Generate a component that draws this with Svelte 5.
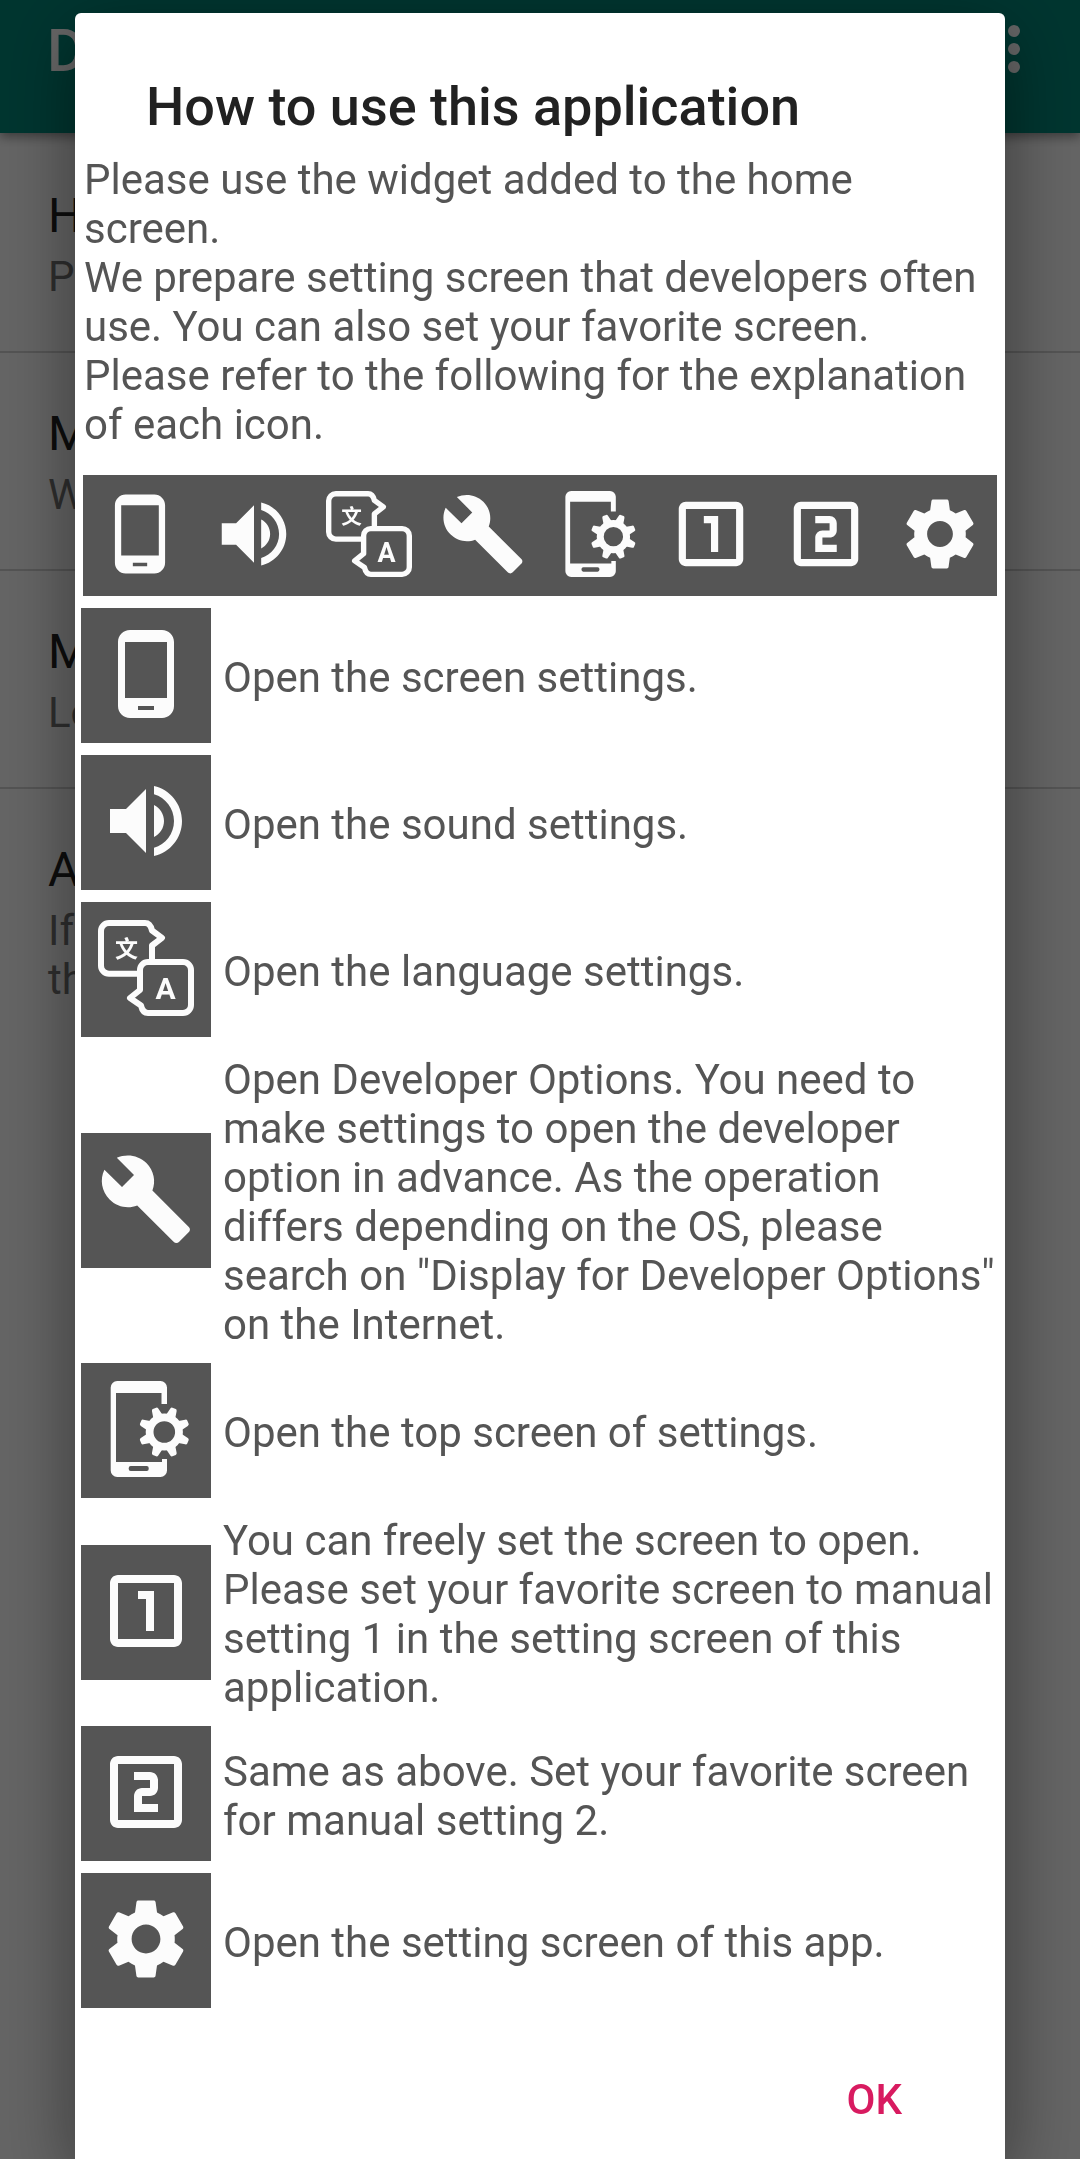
<script>
  const paths = {
    screen: 'M16 1H8C6.34 1 5 2.34 5 4v16c0 1.66 1.34 3 3 3h8c1.66 0 3-1.34 3-3V4c0-1.66-1.34-3-3-3zm-2 20h-4v-1h4v1zm3.25-3H6.75V4h10.5v14z',
    sound: 'M3 9v6h4l5 5V4L7 9H3zm13.5 3c0-1.77-1.02-3.29-2.5-4.03v8.05c1.48-.73 2.5-2.25 2.5-4.02zM14 3.23v2.06c2.89.86 5 3.54 5 6.71s-2.11 5.85-5 6.71v2.06c4.01-.91 7-4.49 7-8.77s-2.99-7.86-7-8.77z',
    developer: 'M22.7 19l-9.1-9.1c.9-2.3.4-5-1.5-6.9-2-2-5-2.4-7.4-1.3L9 6 6 9 1.6 4.7C.4 7.1.9 10.1 2.9 12.1c1.9 1.9 4.6 2.4 6.9 1.5l9.1 9.1c.4.4 1 .4 1.4 0l2.3-2.3c.5-.4.5-1.1.1-1.4z',
    manual1: 'M19 3H5c-1.1 0-2 .9-2 2v14c0 1.1.9 2 2 2h14c1.1 0 2-.9 2-2V5c0-1.1-.9-2-2-2zm0 16H5V5h14v14zM12 17h2V7h-4v2h2v8z',
    manual2: 'M19 3H5c-1.1 0-2 .9-2 2v14c0 1.1.9 2 2 2h14c1.1 0 2-.9 2-2V5c0-1.1-.9-2-2-2zm0 16H5V5h14v14zM15 15h-4v-2h2c1.1 0 2-.89 2-2V9c0-1.11-.9-2-2-2H9v2h4v2h-2c-1.1 0-2 .89-2 2v4h6v-2z',
    app: 'M19.14 12.94c.04-.3.06-.61.06-.94 0-.32-.02-.64-.07-.94l2.03-1.58c.18-.14.23-.41.12-.61l-1.92-3.32c-.12-.22-.37-.29-.59-.22l-2.39.96c-.5-.38-1.03-.7-1.62-.94l-.36-2.54c-.04-.24-.24-.41-.48-.41h-3.84c-.24 0-.43.17-.47.41l-.36 2.54c-.59.24-1.13.57-1.62.94l-2.39-.96c-.22-.08-.47 0-.59.22L2.74 8.87c-.12.21-.08.47.12.61l2.03 1.58c-.05.3-.09.63-.09.94s.02.64.07.94l-2.03 1.58c-.18.14-.23.41-.12.61l1.92 3.32c.12.22.37.29.59.22l2.39-.96c.5.38 1.03.7 1.62.94l.36 2.54c.05.24.24.41.48.41h3.84c.24 0 .44-.17.47-.41l.36-2.54c.59-.24 1.13-.56 1.62-.94l2.39.96c.22.08.47 0 .59-.22l1.92-3.32c.12-.22.07-.47-.12-.61l-2.01-1.58zM12 15.6c-1.98 0-3.6-1.62-3.6-3.6s1.62-3.6 3.6-3.6 3.6 1.62 3.6 3.6-1.62 3.6-3.6 3.6z'
  };

  const rows = [
    { icon: 'screen', text: 'Open the screen settings.' },
    { icon: 'sound', text: 'Open the sound settings.' },
    { icon: 'language', text: 'Open the language settings.' },
    {
      icon: 'developer',
      text: 'Open Developer Options. You need to make settings to open the developer option in advance. As the operation differs depending on the OS, please search on "Display for Developer Options" on the Internet.'
    },
    { icon: 'top', text: 'Open the top screen of settings.' },
    {
      icon: 'manual1',
      text: 'You can freely set the screen to open. Please set your favorite screen to manual setting 1 in the setting screen of this application.'
    },
    { icon: 'manual2', text: 'Same as above. Set your favorite screen for manual setting 2.' },
    { icon: 'app', text: 'Open the setting screen of this app.' }
  ];

  const settings = [
    { title: 'H', summary: ['P'] },
    { title: 'M', summary: ['W'] },
    { title: 'M', summary: ['Lo'] },
    { title: 'A', summary: ['If', 'th'] }
  ];

  const teeth = [0, 1, 2, 3, 4, 5, 6, 7];

  let open = $state(true);
</script>

{#snippet icon(name)}
  {#if name === 'language'}
    <svg class="icon" viewBox="0 0 96 96" aria-hidden="true">
      <g fill="none" stroke="currentColor" stroke-width="6" stroke-linejoin="round">
        <path d="M41 53.7H11a8 8 0 0 1-8-8V11a8 8 0 0 1 8-8h36c4 0 6 3 7 7.5L64 17.8 54 25.5V41" />
        <path d="M42 70V50a8 8 0 0 1 8-8h35a8 8 0 0 1 8 8v35a8 8 0 0 1-8 8H50c-4 0-6-3-7-7.5L32 78z" />
      </g>
      <text class="han" x="28.5" y="37" text-anchor="middle">文</text>
      <text class="latin" x="67.5" y="79" text-anchor="middle">A</text>
    </svg>
  {:else if name === 'top'}
    <svg class="icon" viewBox="0 0 96 96" aria-hidden="true">
      <path
        fill-rule="evenodd"
        d="M63.5 23H69V6.5A6.5 6.5 0 0 0 62.5 0H19.2a6.5 6.5 0 0 0-6.5 6.5v83a6.5 6.5 0 0 0 6.5 6.5h43.3a6.5 6.5 0 0 0 6.5-6.5V78h-5v3H18V12h45.5zM32.7 85h16a2 2 0 0 1 2 2v1a2 2 0 0 1-2 2h-16a2 2 0 0 1-2-2v-1a2 2 0 0 1 2-2z"
      />
      <g transform="translate(66.3 51)">
        <circle r="14.7" fill="none" stroke="currentColor" stroke-width="7.8" />
        {#each teeth as n}
          <path transform="rotate({22.5 + n * 45})" d="M-5-16l1.6-8q.3-1.6 1.6-1.6h3.6q1.3 0 1.6 1.6l1.6 8z" />
        {/each}
      </g>
    </svg>
  {:else}
    <svg class="icon" viewBox="0 0 24 24" aria-hidden="true">
      <path d={paths[name]} />
    </svg>
  {/if}
{/snippet}

<div class="screen">
  <header class="app-bar">
    <h1>D</h1>
    <button class="more" aria-label="More options">
      <span></span>
      <span></span>
      <span></span>
    </button>
  </header>

  <ul class="settings">
    {#each settings as item}
      <li>
        <p class="item-title">{item.title}</p>
        <div class="item-summary">
          {#each item.summary as line}
            <p>{line}</p>
          {/each}
        </div>
      </li>
    {/each}
  </ul>
</div>

{#if open}
  <div class="backdrop">
    <div class="dialog" role="dialog" aria-modal="true" aria-labelledby="dialog-title">
      <h2 id="dialog-title">How to use this application</h2>

      <div class="intro">
        <p>Please use the widget added to the home screen.</p>
        <p>We prepare setting screen that developers often use. You can also set your favorite screen.</p>
        <p>Please refer to the following for the explanation of each icon.</p>
      </div>

      <div class="strip">
        {#each rows as row}
          {@render icon(row.icon)}
        {/each}
      </div>

      <ul class="rows">
        {#each rows as row}
          <li>
            <div class="tile">{@render icon(row.icon)}</div>
            <p>{row.text}</p>
          </li>
        {/each}
      </ul>

      <div class="actions">
        <button class="ok" onclick={() => (open = false)}>OK</button>
      </div>
    </div>
  </div>
{/if}

<style>
  :global(body) {
    background-color: #fafafa;
    font-family: Roboto, 'Noto Sans', sans-serif;
  }

  h1,
  h2,
  p,
  ul {
    margin: 0;
    padding: 0;
  }

  ul {
    list-style: none;
  }

  button {
    border: none;
    background: none;
    font-family: inherit;
    cursor: pointer;
  }

  .screen {
    height: 100vh;
    overflow: hidden;
  }

  .app-bar {
    display: flex;
    justify-content: space-between;
    align-items: flex-start;
    box-sizing: border-box;
    min-height: 133px;
    padding: 16px 48px 0 47px;
    background-color: #008577;
    color: #fff;
    box-shadow: 0 4px 10px rgba(0, 0, 0, 0.4);
  }

  .app-bar h1 {
    font-size: 59px;
    font-weight: 500;
    line-height: 70px;
  }

  .more {
    display: flex;
    flex-direction: column;
    gap: 6px;
    padding: 9px 12px;
  }

  .more span {
    width: 12px;
    height: 12px;
    border-radius: 50%;
    background-color: #fff;
  }

  .settings {
    padding-top: 2px;
  }

  .settings li {
    display: flex;
    flex-direction: column;
    gap: 8px;
    padding: 53px 48px 50px;
    border-bottom: 2px solid #d0d0d0;
  }

  .settings li:last-child {
    border-bottom: none;
  }

  .item-title {
    font-size: 48px;
    line-height: 56px;
    color: #212121;
  }

  .item-summary {
    font-size: 42px;
    line-height: 49px;
    color: #737373;
  }

  .backdrop {
    position: fixed;
    inset: 0;
    display: flex;
    justify-content: center;
    padding: 13px 75px 0;
    background-color: rgba(0, 0, 0, 0.6);
    overflow: hidden;
  }

  .dialog {
    flex: 1;
    min-width: 0;
    background-color: #fff;
    border-radius: 6px 6px 0 0;
    box-shadow: 0 20px 70px rgba(0, 0, 0, 0.45);
    color: #555;
    font-size: 42px;
    line-height: 49px;
  }

  h2 {
    padding: 62px 71px 16px;
    font-size: 54px;
    font-weight: 500;
    line-height: 64px;
    color: #212121;
  }

  .intro {
    padding: 0 8px 0 9px;
  }

  .strip {
    display: flex;
    justify-content: space-around;
    margin: 26px 8px 6px;
    padding: 16px 0 19px;
    background-color: #555;
    color: #fcfcfc;
  }

  .strip .icon {
    width: 86px;
    height: 86px;
  }

  .rows {
    padding: 0 6px;
  }

  .rows li {
    display: flex;
    align-items: center;
    gap: 12px;
  }

  .rows p {
    flex: 1;
    padding: 12px 0 8px;
  }

  .tile {
    display: flex;
    flex-shrink: 0;
    margin: 6px 0;
    padding: 18px 17px 21px;
    background-color: #555;
    color: #fcfcfc;
  }

  .tile .icon {
    width: 96px;
    height: 96px;
  }

  .icon {
    display: block;
    fill: currentColor;
  }

  .han {
    font-family: 'Noto Sans CJK SC', sans-serif;
    font-size: 23px;
    font-weight: 700;
  }

  .latin {
    font-size: 30px;
    font-weight: 700;
  }

  .actions {
    display: flex;
    justify-content: flex-end;
    padding: 43px 82px;
  }

  .ok {
    padding: 18px 21px;
    font-size: 42px;
    font-weight: 500;
    line-height: 49px;
    color: #d81b60;
  }
</style>
